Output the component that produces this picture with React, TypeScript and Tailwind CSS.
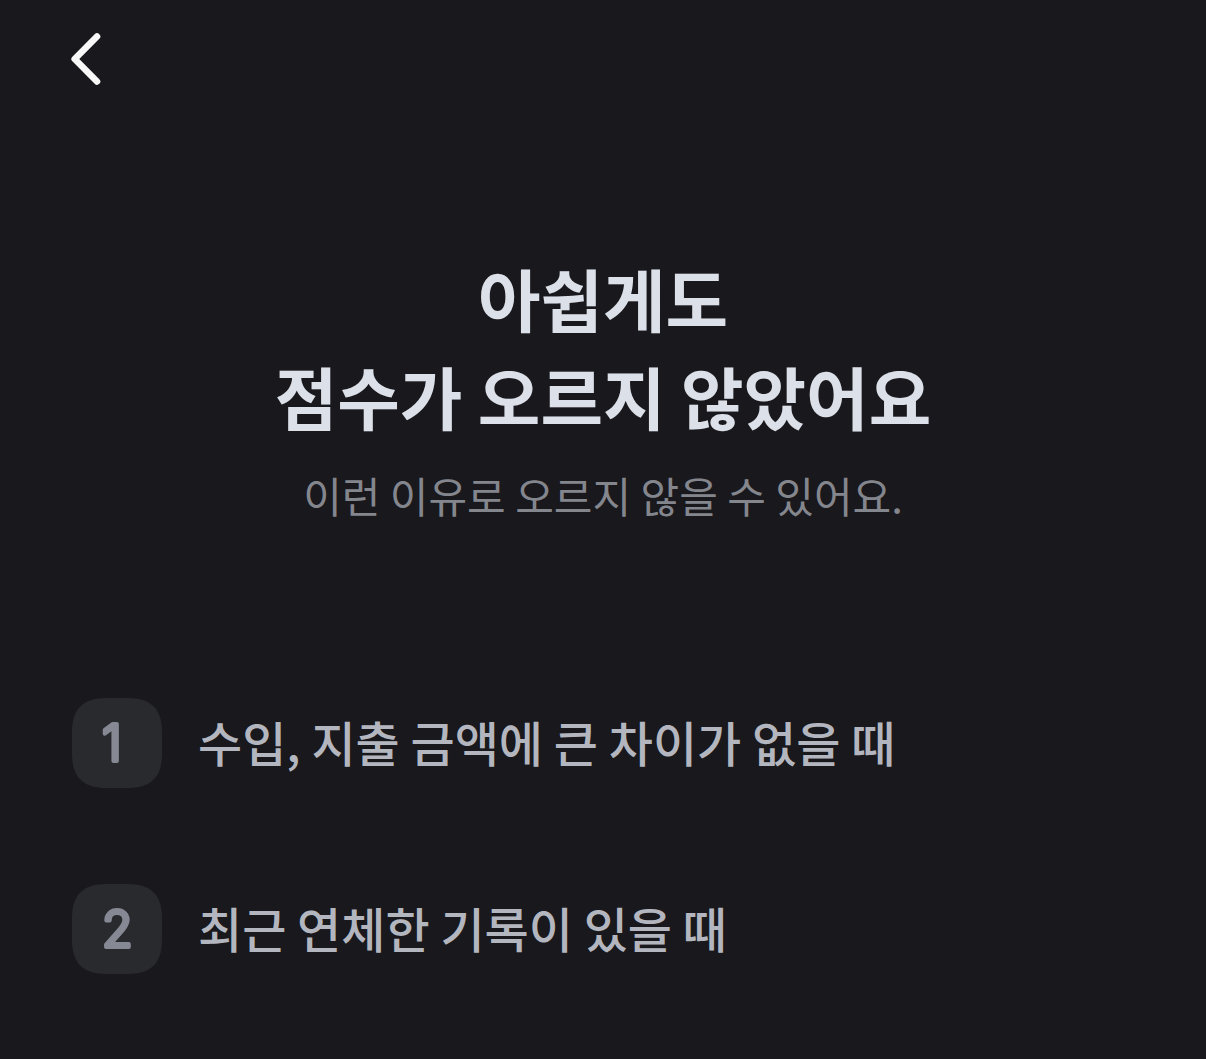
const REASONS = [
  "수입, 지출 금액에 큰 차이가 없을 때",
  "최근 연체한 기록이 있을 때",
];

function BackButton() {
  return (
    <button type="button" aria-label="뒤로" className="block p-2 text-[#f8f8f9]">
      <svg width="36" height="56" viewBox="0 0 36 56" fill="none">
        <path
          d="M29 5.5L6.7 28L29 50.5"
          stroke="currentColor"
          strokeWidth="6.6"
          strokeLinecap="round"
          strokeLinejoin="round"
        />
      </svg>
    </button>
  );
}

// Squircle badge; the round-joined stroke softens the corners of the digit
function NumberBadge({ value }: { value: number }) {
  return (
    <svg className="size-[90px] shrink-0" viewBox="0 0 90 90">
      <path
        d="M34 0H56C79 0 90 11 90 34V56C90 79 79 90 56 90H34C11 90 0 79 0 56V34C0 11 11 0 34 0Z"
        fill="#292a2e"
      />
      <text
        x="30"
        y="63"
        fill="#868994"
        stroke="#868994"
        strokeWidth="4"
        strokeLinejoin="round"
        className="font-['Inter',sans-serif] text-[50px] font-light"
      >
        {value}
      </text>
    </svg>
  );
}

export default function App() {
  return (
    <div className="min-h-screen bg-[#19181c] font-['Noto_Sans_CJK_KR',sans-serif]">
      <header className="px-[60px] pt-[23px]">
        <BackButton />
      </header>
      <main>
        <section className="px-6 pt-[154px] text-center">
          <h1 className="text-[68px] leading-[98px] font-bold text-[#dce0e9]">
            아쉽게도
            <br />
            점수가 오르지 않았어요
          </h1>
          <p className="mt-[18px] text-[42px] leading-[64px] text-[#84868e]">
            이런 이유로 오르지 않을 수 있어요.
          </p>
        </section>
        <ol className="flex flex-col gap-24 px-[72px] pt-[171px] pb-[84px]">
          {REASONS.map((reason, index) => (
            <li key={reason} className="flex items-center gap-9">
              <NumberBadge value={index + 1} />
              <span className="pb-1 text-5xl leading-[64px] font-medium text-[#b3b6bf]">
                {reason}
              </span>
            </li>
          ))}
        </ol>
      </main>
    </div>
  );
}
